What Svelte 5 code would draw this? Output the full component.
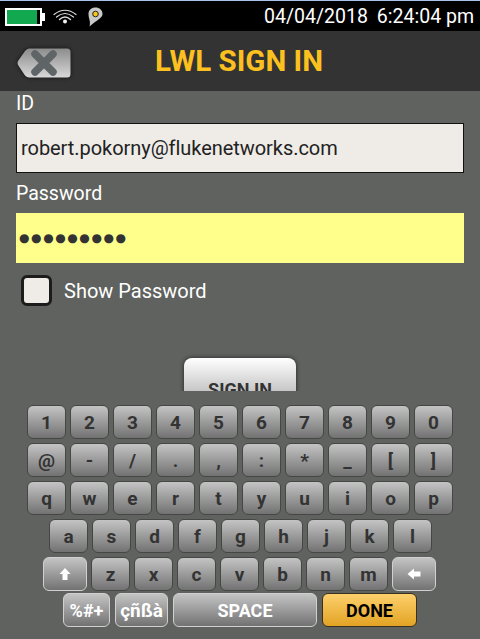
<script lang="ts">
  const rows = [
    ["1", "2", "3", "4", "5", "6", "7", "8", "9", "0"],
    ["@", "-", "/", ".", ",", ":", "*", "_", "[", "]"],
    ["q", "w", "e", "r", "t", "y", "u", "i", "o", "p"],
  ];
  const homeRow = ["a", "s", "d", "f", "g", "h", "j", "k", "l"];
  const lowRow = ["z", "x", "c", "v", "b", "n", "m"];
</script>

<div class="screen">
  <div class="status">
    <div class="status-left">
      <div class="battery"><div class="charge"></div></div>
      <svg class="wifi" width="24" height="15" viewBox="0 0 24 15" fill="none" stroke="#dcdcdc" stroke-linecap="round">
        <path d="M1 5.5 Q12 -3 23 5.5" stroke-width="1.2" />
        <path d="M3.5 8 Q12 1 20.5 8" stroke-width="1.2" />
        <path d="M6.5 10.5 Q12 5.5 17.5 10.5" stroke-width="1.4" />
        <circle cx="12" cy="12.5" r="2" fill="#f0f0f0" stroke="none" />
      </svg>
      <svg class="pin" width="15" height="20" viewBox="0 0 15 20">
        <path d="M7.5 0.5 C11.5 0.5 14.5 3 14.5 7 C14.5 11 9 13 1.5 19.5 C3 14 0.5 12 0.5 7 C0.5 3 3.5 0.5 7.5 0.5Z" fill="#c8c8c8" />
        <circle cx="7.5" cy="7" r="2.8" fill="#f5c518" stroke="#222" stroke-width="1" />
      </svg>
    </div>
    <div class="clock"><span>04/04/2018</span><span>6:24:04 pm</span></div>
  </div>

  <header class="titlebar">
    <button class="back" aria-label="Back">
      <svg width="54" height="30" viewBox="0 0 54 30">
        <defs>
          <linearGradient id="backfill" x1="0" y1="0" x2="0" y2="1">
            <stop offset="0" stop-color="#8c8c8c" />
            <stop offset="1" stop-color="#d8d8d8" />
          </linearGradient>
        </defs>
        <path d="M12 0.5 H50 Q53.5 0.5 53.5 4 V26 Q53.5 29.5 50 29.5 H12 Q10 29.5 8 27.5 L1 17 Q0 15 1 13 L8 3 Q10 0.5 12 0.5 Z" fill="url(#backfill)" />
        <path d="M18 6 L36 24 M36 6 L18 24" stroke="#5f6467" stroke-width="7.5" stroke-linecap="round" />
      </svg>
    </button>
    <h1>LWL SIGN IN</h1>
  </header>

  <main class="form">
    <div class="label">ID</div>
    <div class="field">robert.pokorny@flukenetworks.com</div>
    <div class="label pw">Password</div>
    <div class="field active"><span class="dots">●●●●●●●●●</span></div>
    <div class="show">
      <span class="check"></span>
      <span>Show Password</span>
    </div>
    <div class="signin-clip">
      <button class="signin">SIGN IN</button>
    </div>
  </main>

  <section class="keyboard">
    {#each rows as row}
      <div class="row">
        {#each row as k}
          <button class="key">{k}</button>
        {/each}
      </div>
    {/each}
    <div class="row home">
      {#each homeRow as k}
        <button class="key">{k}</button>
      {/each}
    </div>
    <div class="row low">
      <button class="key light arrow" aria-label="Shift">
        <svg width="12" height="14" viewBox="0 0 12 14"><path d="M6 1 L11.5 7 H8.5 V13 H3.5 V7 H0.5 Z" fill="#fff" /></svg>
      </button>
      {#each lowRow as k}
        <button class="key">{k}</button>
      {/each}
      <button class="key light arrow" aria-label="Backspace">
        <svg width="14" height="12" viewBox="0 0 14 12"><path d="M0.5 6 L7 0.5 V3.5 H13.5 V8.5 H7 V11.5 Z" fill="#fff" /></svg>
      </button>
    </div>
    <div class="row bottom">
      <button class="key light sym">%#+</button>
      <button class="key light alt">çñßà</button>
      <button class="key light space">SPACE</button>
      <button class="key done">DONE</button>
    </div>
  </section>
</div>

<style>
  :global(body) {
    margin: 0;
    background: #5f625e;
  }

  .screen {
    width: 480px;
    height: 639px;
    overflow: hidden;
    display: flex;
    flex-direction: column;
    font-family: Roboto, "Liberation Sans", sans-serif;
    background: #5f625e;
  }

  .status {
    height: 31px;
    flex-shrink: 0;
    box-sizing: border-box;
    border-top: 1px solid #a9c4ea;
    background: #000;
    color: #fff;
    display: flex;
    align-items: center;
    justify-content: space-between;
    padding: 0 6px 0 5px;
  }

  .status-left {
    display: flex;
    align-items: center;
  }

  .battery {
    width: 37px;
    height: 18px;
    box-sizing: border-box;
    border: 2px solid #fff;
    background: #000;
    padding: 0 3px 0 0;
    position: relative;
    margin-top: 1px;
  }

  .battery::after {
    content: "";
    position: absolute;
    right: -5px;
    top: 3px;
    width: 3px;
    height: 8px;
    background: #fff;
  }

  .charge {
    height: 100%;
    background: #12a84f;
  }

  .wifi {
    margin-left: 11px;
    margin-top: 1px;
  }

  .pin {
    margin-left: 11px;
    margin-top: 1px;
  }

  .clock {
    font-size: 19.5px;
    display: flex;
    gap: 9px;
  }

  .titlebar {
    height: 60px;
    background: #333;
    display: flex;
    align-items: center;
    flex-shrink: 0;
  }

  .back {
    border: none;
    background: none;
    padding: 0;
    margin: 4px 0 0 17px;
    display: flex;
    filter: drop-shadow(0 0 2px #111);
  }

  h1 {
    margin: 0 0 0 84px;
    font-size: 29.5px;
    font-weight: 700;
    color: #fcc01f;
    font-family: Roboto, sans-serif;
  }

  .form {
    position: relative;
    flex: 1;
    padding: 0 16px;
    color: #fff;
    min-height: 0;
  }

  .label {
    font-size: 19.5px;
    line-height: 26px;
    height: 32px;
  }

  .label.pw {
    height: 40px;
    line-height: 41px;
  }

  .field {
    height: 50px;
    box-sizing: border-box;
    border: 1px solid #111;
    background: #efece8;
    color: #222;
    font-size: 20px;
    letter-spacing: -0.05px;
    line-height: 48px;
    padding-left: 4px;
  }

  .field.active {
    background: #ffff8c;
    border: none;
    padding-left: 3px;
    line-height: 44px;
  }

  .dots {
    font-size: 12px;
    letter-spacing: 1.6px;
    color: #333;
    font-family: "DejaVu Sans", sans-serif;
  }

  .show {
    display: flex;
    align-items: center;
    gap: 12px;
    margin: 12px 0 0 5px;
    font-size: 20px;
  }

  .check {
    width: 31px;
    height: 31px;
    box-sizing: border-box;
    border: 3px solid #1c1c1c;
    border-radius: 6px;
    background: #efece8;
  }

  .signin-clip {
    position: absolute;
    left: 178px;
    bottom: 0;
    width: 124px;
    height: 38px;
    padding: 5px 6px 0;
    box-sizing: border-box;
    overflow: hidden;
  }

  .signin {
    display: block;
    width: 112px;
    height: 50px;
    border: none;
    border-radius: 8px 8px 0 0;
    padding: 12px 0 0;
    background: linear-gradient(#fff, #a9a9a9);
    box-shadow: 0 0 4px #222;
    color: #333;
    font: 700 18px Roboto, sans-serif;
  }

  .keyboard {
    height: 248px;
    box-sizing: border-box;
    padding-top: 14px;
    display: flex;
    flex-direction: column;
    gap: 4px;
    flex-shrink: 0;
  }

  .row {
    display: flex;
    gap: 4px;
    padding-left: 27px;
  }

  .row.home {
    padding-left: 49px;
  }

  .row.low {
    padding-left: 43px;
  }

  .row.bottom {
    padding-left: 63px;
    gap: 5px;
    margin-top: -2px;
  }

  .key {
    width: 39px;
    height: 34px;
    box-sizing: border-box;
    padding: 0;
    border: 1px solid #454744;
    border-radius: 6px;
    background: linear-gradient(#c4c4c4, #727272);
    color: #333;
    font: 700 19px Roboto, sans-serif;
  }

  .key.light {
    border: 1px solid #d0d0d0;
    color: #fff;
  }

  .arrow {
    width: 44px;
    display: flex;
    align-items: center;
    justify-content: center;
  }

  .sym {
    width: 47px;
    font-size: 18px;
  }

  .alt {
    width: 53px;
    font-size: 19px;
  }

  .space {
    width: 144px;
    font-size: 18px;
  }

  .key.done {
    width: 95px;
    background: linear-gradient(#fdd06c, #e2a324);
    border-color: #3a3020;
    color: #000;
    font-size: 18px;
  }
</style>
